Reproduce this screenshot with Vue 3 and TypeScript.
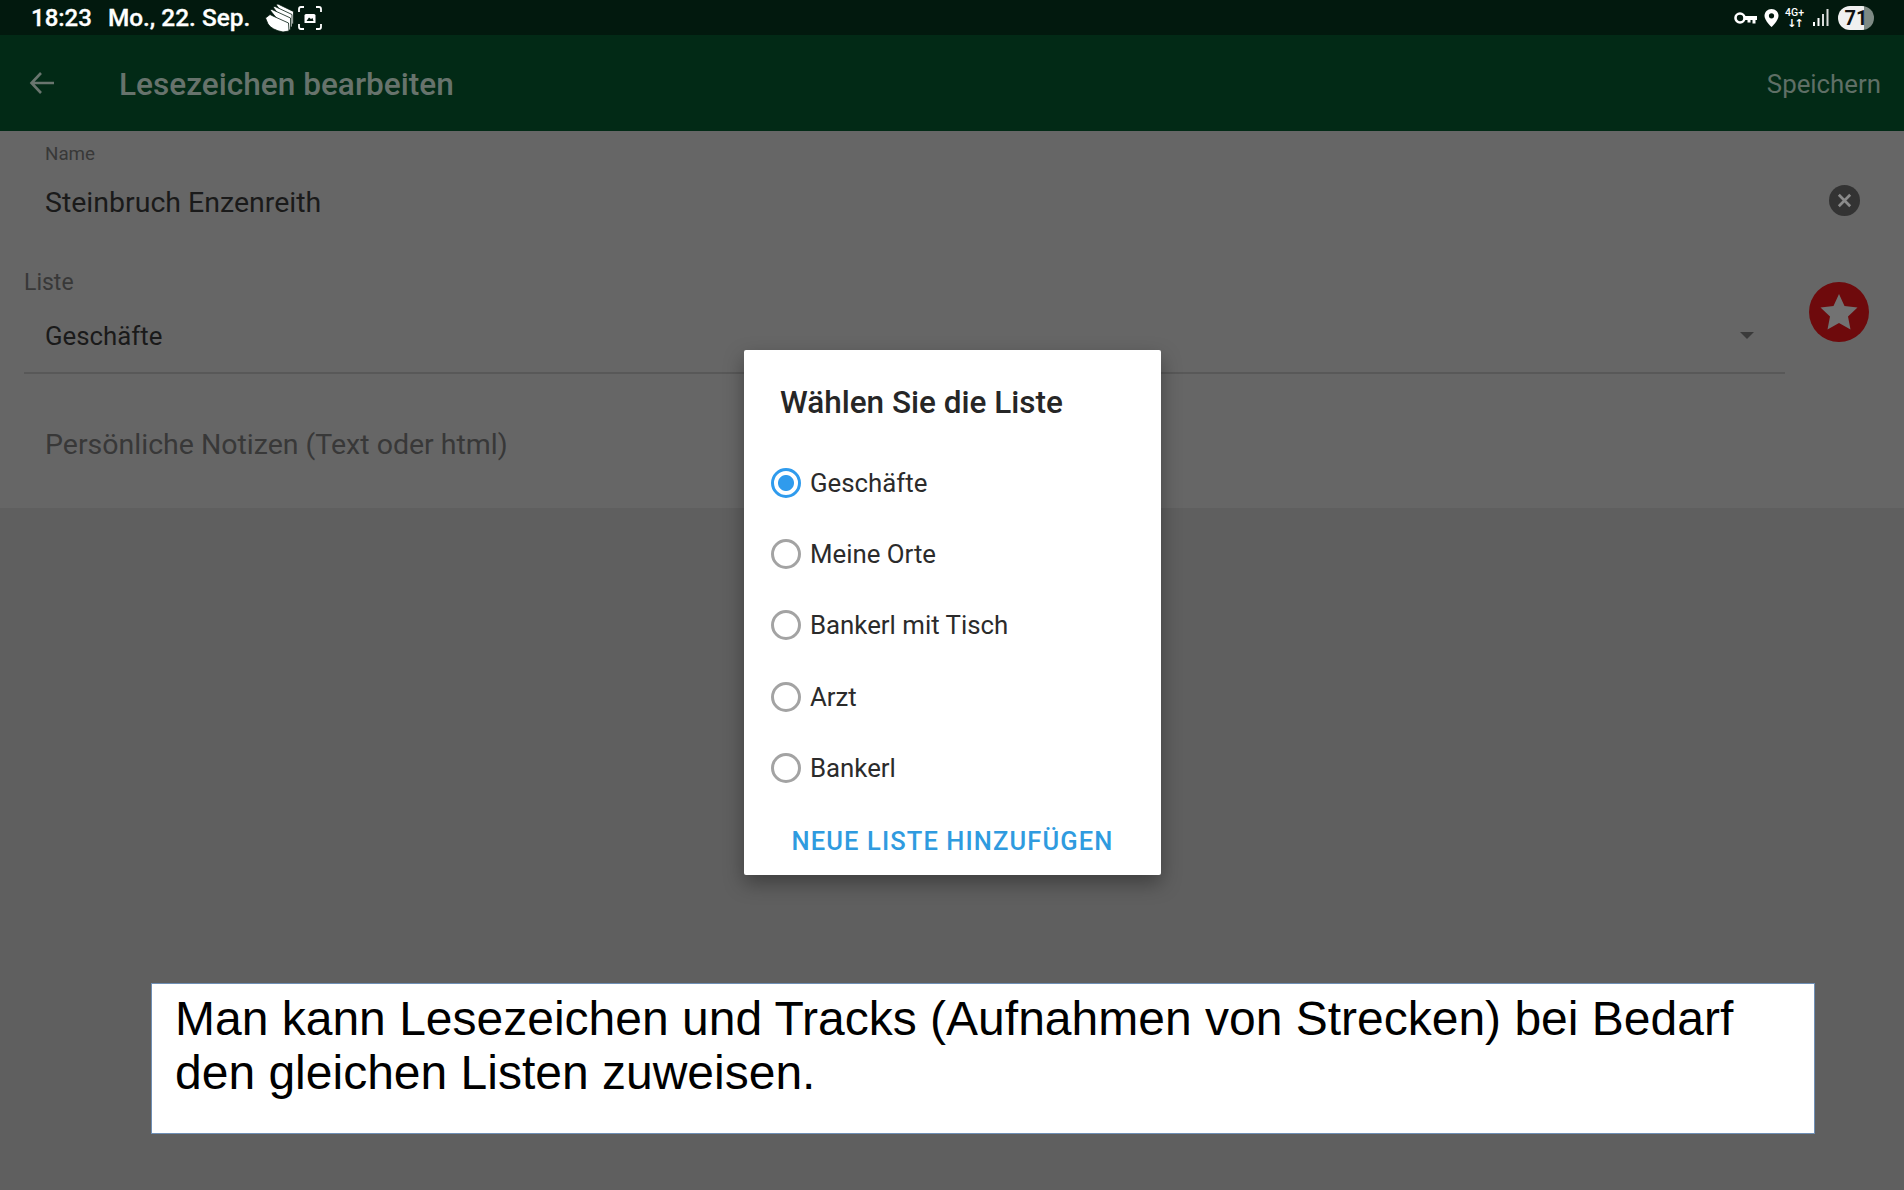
<script setup lang="ts">
const lists = ['Geschäfte', 'Meine Orte', 'Bankerl mit Tisch', 'Arzt', 'Bankerl']
</script>

<template>
  <div class="screen">
    <div class="statusbar">
      <div class="status-left">
        <span class="time">18:23</span>
        <span class="date">Mo., 22. Sep.</span>
        <svg class="ic-files" width="29" height="28" viewBox="0 0 29 28">
          <g fill="#fff" stroke="#02190e" stroke-width="0.8">
            <path d="M11 0.500 13 0 28.500 7.500 28.500 20 25 20Z" />
            <path d="M8 3 10 2.500 27 10.500 27 23 23 23Z" />
            <path d="M5 6 7 5.500 25.500 14 25.500 26 21 26Z" />
            <path d="M0.500 14 5 10.500 8 12 23.500 19 24 27 18 28Q7 26 3 20Z" />
          </g>
        </svg>
        <svg class="ic-shot" width="24" height="24" viewBox="0 0 24 24" fill="none" stroke="#fff" stroke-width="1.800">
          <path d="M1 6V3Q1 1 3 1H6M18 1H21Q23 1 23 3V6M23 18V21Q23 23 21 23H18M6 23H3Q1 23 1 21V18" />
          <path d="M6.500 17V9.500Q6.500 8 8 8H16Q17.500 8 17.500 9.500V17Z" fill="#fff" stroke="none" />
          <path d="M8.500 15 11 11.500 13 13 14.500 12 15.500 15Z" fill="#02190e" stroke="none" />
        </svg>
      </div>
      <div class="status-right">
        <svg class="ic-key" width="23" height="14" viewBox="0 0 23 14">
          <circle cx="6" cy="7" r="4.500" fill="none" stroke="#fff" stroke-width="2.600" />
          <path d="M10 5H23V9H21.500V12.500H18.500V9H16.500V11.500H13.500V9H10Z" fill="#fff" />
        </svg>
        <svg class="ic-pin" width="15" height="18" viewBox="0 0 15 18">
          <path d="M7.5 0C3.4 0 .5 3 .5 7c0 4.500 7 11 7 11s7-6.500 7-11c0-4-2.900-7-7-7Z" fill="#fff" />
          <circle cx="7.500" cy="6.800" r="2.600" fill="#02190e" />
        </svg>
        <span class="net">4G+<br /><b>↓↑</b></span>
        <svg width="16" height="17" viewBox="0 0 16 17" fill="#fff">
          <rect x="0" y="13" width="2" height="4" />
          <rect x="4.500" y="9" width="2" height="8" />
          <rect x="9" y="5" width="2" height="12" opacity="0.85" />
          <rect x="13.500" y="0" width="2" height="17" opacity="0.85" />
        </svg>
        <span class="battery">71</span>
      </div>
    </div>

    <header class="toolbar">
      <svg class="back" width="26" height="24" viewBox="0 0 26 24" fill="none" stroke="#69756e" stroke-width="2.600">
        <path d="M25 12H3M12 2 2.500 12 12 22" />
      </svg>
      <h1 class="title">Lesezeichen bearbeiten</h1>
      <span class="save">Speichern</span>
    </header>

    <section class="form">
      <div class="name-row">
        <div>
          <div class="small-label">Name</div>
          <div class="name-value">Steinbruch Enzenreith</div>
        </div>
        <svg class="clear" width="31" height="31" viewBox="0 0 30 30">
          <circle cx="15" cy="15" r="15" fill="#333" />
          <path d="M9.500 9.500 20.500 20.500M20.500 9.500 9.500 20.500" stroke="#8b8b8b" stroke-width="2.600" />
        </svg>
      </div>

      <div class="list-row">
        <div class="list-field">
          <div class="list-label">Liste</div>
          <div class="select">
            <span>Geschäfte</span>
            <i class="caret"></i>
          </div>
        </div>
        <svg class="fav" width="60" height="60" viewBox="0 0 60 60">
          <circle cx="30" cy="30" r="30" fill="#6e0a0c" />
          <path d="M30 12 35.500 24 48.500 25.500 39 34.500 41.500 47.500 30 41 18.500 47.500 21 34.500 11.500 25.500 24.500 24Z" fill="#727272" />
        </svg>
      </div>

      <div class="notes">Persönliche Notizen (Text oder html)</div>
    </section>

    <div class="dialog">
      <h2 class="dialog-title">Wählen Sie die Liste</h2>
      <div class="options">
        <div v-for="(item, i) in lists" :key="item" class="option">
          <span class="radio" :class="{ on: i === 0 }"></span>
          <span>{{ item }}</span>
        </div>
      </div>
      <div class="add">NEUE LISTE HINZUFÜGEN</div>
    </div>

    <div class="caption">
      Man kann Lesezeichen und Tracks (Aufnahmen von Strecken) bei Bedarf den gleichen Listen zuweisen.
    </div>
  </div>
</template>

<style scoped>
.screen {
  position: relative;
  width: 1904px;
  height: 1190px;
  overflow: hidden;
  display: flex;
  flex-direction: column;
  background: #5f5f5f;
  font-family: Roboto, sans-serif;
}

.statusbar {
  height: 35px;
  background: #02190e;
  display: flex;
  align-items: center;
  justify-content: space-between;
  padding: 0 30px 0 31px;
  color: #fff;
}

.status-left,
.status-right {
  display: flex;
  align-items: center;
}

.time,
.date {
  font-size: 24px;
  font-weight: 500;
  -webkit-text-stroke: 0.3px #fff;
}

.date {
  margin-left: 16px;
  font-size: 24.400px;
}

.ic-files {
  margin-left: 15px;
}

.ic-shot {
  margin-left: 4px;
}

.status-right {
  gap: 9px;
}

.ic-key {
  margin-right: -2px;
}

.ic-pin {
  margin-right: -3px;
}

.net {
  font-size: 10.500px;
  line-height: 11px;
  font-weight: 500;
  text-align: center;
}

.net b {
  font-family: "DejaVu Sans", sans-serif;
  font-size: 11px;
  letter-spacing: -2px;
}

.battery {
  width: 36px;
  height: 24px;
  border-radius: 12px;
  background: linear-gradient(90deg, #f0f0f0 71%, #7e8a84 71%);
  color: #111;
  font-size: 20px;
  font-weight: 700;
  line-height: 24px;
  text-align: center;
}

.toolbar {
  height: 96px;
  background: #022a16;
  display: flex;
  align-items: center;
  padding: 2px 23px 0 29px;
  box-sizing: border-box;
}

.back {
  margin-top: -2px;
}

.title {
  margin: 0 0 0 64px;
  flex: 1;
  font-size: 31.600px;
  font-weight: 500;
  color: #67736c;
}

.save {
  font-size: 25.800px;
  color: #5f6f66;
}

.form {
  height: 377px;
  background: #666;
  padding: 11px 35px 0 24px;
  box-sizing: border-box;
}

.name-row {
  display: flex;
  justify-content: space-between;
  padding: 0 9px 0 21px;
}

.small-label {
  font-size: 18.800px;
  line-height: 24px;
  color: #383838;
}

.name-value {
  margin-top: 17px;
  font-size: 28.500px;
  line-height: 40px;
  color: #1a1a1a;
}

.clear {
  margin-top: 43px;
}

.list-row {
  display: flex;
  align-items: flex-start;
  gap: 24px;
  margin-top: 46px;
}

.list-field {
  flex: 1;
}

.list-label {
  font-size: 23px;
  line-height: 28px;
  color: #383838;
}

.select {
  height: 73px;
  margin-top: 2px;
  padding: 0 31px 0 21px;
  display: flex;
  align-items: center;
  justify-content: space-between;
  border-bottom: 2px solid #585858;
  font-size: 25.800px;
  color: #1a1a1a;
}

.caret {
  width: 0;
  height: 0;
  border-left: 7px solid transparent;
  border-right: 7px solid transparent;
  border-top: 7px solid #3a3a3a;
}

.fav {
  margin-top: 13px;
}

.notes {
  margin-top: 51px;
  padding-left: 21px;
  font-size: 28.500px;
  line-height: 40px;
  color: #383838;
}

.dialog {
  position: absolute;
  left: 744px;
  top: 350px;
  width: 417px;
  height: 525px;
  box-sizing: border-box;
  background: #fff;
  border-radius: 2px;
  box-shadow: 0 8px 20px rgba(0, 0, 0, 0.35);
  padding-top: 35px;
  display: flex;
  flex-direction: column;
}

.dialog-title {
  margin: 0 0 0 36px;
  font-size: 31.500px;
  line-height: 36px;
  font-weight: 500;
  color: #262626;
}

.options {
  margin-top: 26px;
  display: flex;
  flex-direction: column;
  padding-left: 27px;
}

.option {
  height: 71.400px;
  display: flex;
  align-items: center;
  gap: 9px;
  font-size: 25.800px;
  color: #2b2b2b;
}

.radio {
  width: 30px;
  height: 30px;
  box-sizing: border-box;
  border-radius: 50%;
  border: 3px solid #a3a3a3;
  background: #fff;
}

.radio.on {
  border-color: #2f9bed;
  background: radial-gradient(circle, #2f9bed 0 7.500px, #fff 8.500px);
}

.add {
  margin-top: 22px;
  text-align: center;
  font-size: 25.500px;
  font-weight: 500;
  letter-spacing: 1.100px;
  color: #2f9bdf;
}

.caption {
  position: absolute;
  left: 151px;
  top: 983px;
  width: 1664px;
  height: 151px;
  box-sizing: border-box;
  padding: 8px 60px 0 23px;
  background: #fff;
  border: 1px solid #6f8fb5;
  font-family: "Liberation Sans", Arial, sans-serif;
  font-size: 48px;
  line-height: 54px;
  color: #000;
}
</style>
